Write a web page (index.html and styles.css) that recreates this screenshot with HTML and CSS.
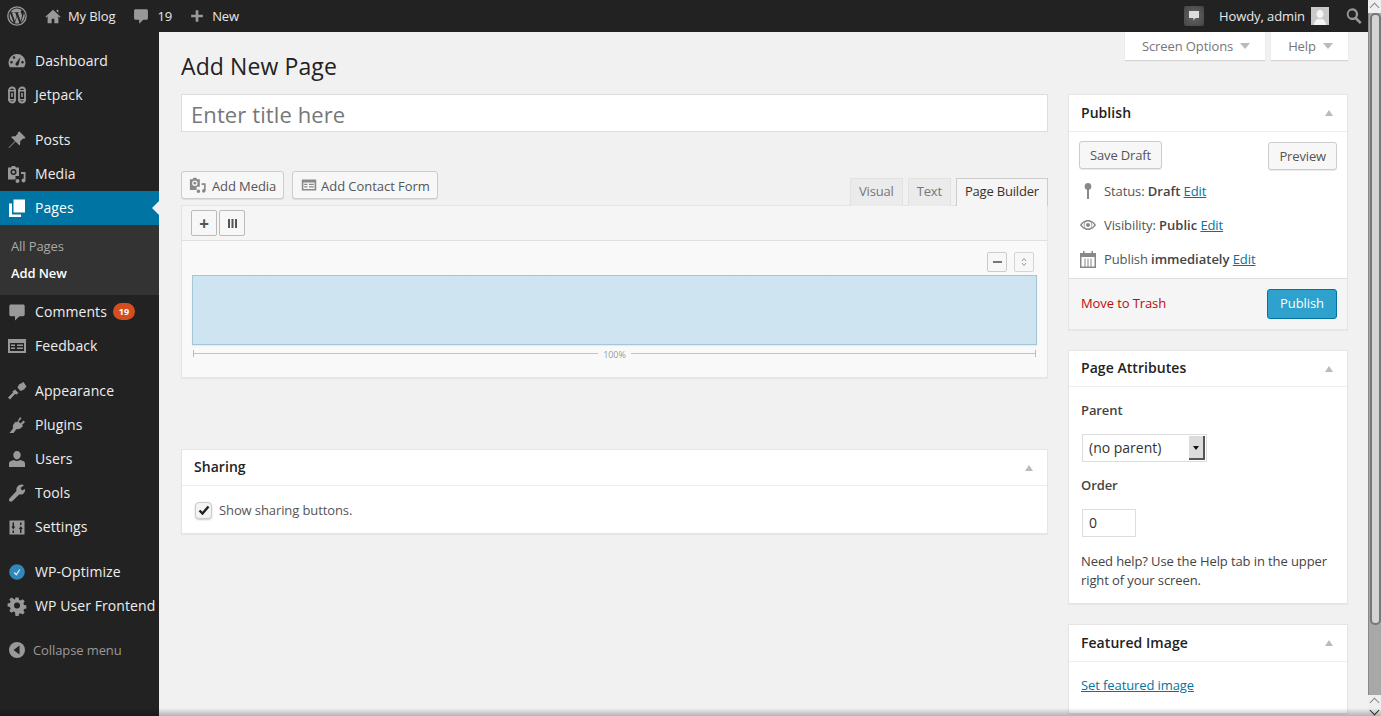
FILE: index.html
```html
<!DOCTYPE html>
<html lang="en">
<head>
<meta charset="utf-8">
<title>Add New Page</title>
<link rel="stylesheet" href="styles.css">
</head>
<body>
<div class="window">
  <div class="viewport">
    <header class="adminbar">
      <div class="bar-left">
        <svg class="bar-wp" viewBox="0 0 20 20"><circle cx="10" cy="10" r="9.2" fill="none" stroke="#999" stroke-width="1.3"/><path fill="#999" d="M2.6 10c0 2.9 1.7 5.4 4.1 6.6L3.1 7c-.3.9-.5 1.9-.5 3zm12.4-.4c0-.9-.3-1.6-.6-2.1-.4-.6-.7-1.100-.7-1.700 0-.7.5-1.300 1.200-1.300h.1A7.400 7.400 0 0 0 3.400 6.300h.5c.8 0 2-.1 2-.1.400 0 .5.600.1.600 0 0-.4.100-.9.100l2.800 8.300 1.700-5-1.200-3.300c-.4 0-.8-.1-.8-.1-.4 0-.4-.7 0-.6 0 0 1.300.1 2 .1.800 0 2-.1 2-.1.400 0 .5.600.1.600 0 0-.4.100-.9.100l2.800 8.200.8-2.600c.3-1.100.6-1.900.6-2.500zm-4.900 1-2.300 6.700a7.500 7.500 0 0 0 4.600-.1l-.1-.1-2.200-6.500zm6.600-4.400.1.800c0 .8-.1 1.600-.6 2.700l-2.300 6.700a7.400 7.400 0 0 0 2.800-10.200z"/></svg>
        <svg class="bar-ico" viewBox="0 0 20 20"><path fill="#999" d="M16 8.500 10 3 1.500 10.700l1 1L4 10.400V18h4.500v-5h3v5H16v-7.600l1.500 1.300 1-1L16 8.500zM14 3h2v3.500l-2-1.800z"/></svg>
        <span class="bar-text">My Blog</span>
        <svg class="bar-ico bar-gap-c" viewBox="0 0 20 20"><path fill="#999" d="M4 2.500h12c1 0 1.700.7 1.700 1.700v8.300c0 1-.7 1.700-1.700 1.700h-3.500L8 18.500v-4.300H4c-1 0-1.700-.7-1.700-1.700V4.200c0-1 .7-1.700 1.700-1.700z"/></svg>
        <span class="bar-text bar-num">19</span>
        <svg class="bar-ico bar-gap" viewBox="0 0 20 20"><path fill="#999" d="M8.500 3.500h3v5h5v3h-5v5h-3v-5h-5v-3h5z"/></svg>
        <span class="bar-text">New</span>
      </div>
      <div class="bar-right">
        <span class="notify"><svg viewBox="0 0 12 12"><path fill="#ddd" d="M1 1h10v7H7.500L5.500 10.500V8H1z"/></svg></span>
        <span class="bar-text howdy">Howdy, admin</span>
        <svg class="avatar" viewBox="0 0 18 18"><rect width="18" height="18" fill="#c9c9c9"/><path fill="#f4f4f4" d="M9 3c2.200 0 3.500 1.700 3.500 4S11 11 9 11 5.500 9.300 5.500 7 6.800 3 9 3zM3 18c0-3.500 2-5.500 4-6.300 1.200.6 2.800.6 4 0 2 .8 4 2.800 4 6.300z"/></svg>
        <svg class="bar-search" viewBox="0 0 20 20"><path fill="#999" d="M8 1.500a6.500 6.500 0 0 1 5.300 10.300l5.200 5.200-2 2-5.200-5.200A6.500 6.500 0 1 1 8 1.500zm0 2.500a4 4 0 1 0 0 8 4 4 0 0 0 0-8z"/></svg>
      </div>
    </header>
    <div class="below">
      <nav class="sidebar">
        <ul class="menu">
          <li class="item"><svg class="mi" viewBox="0 0 20 20"><path fill="#999" d="M10 3a8.500 8.500 0 0 0-8.500 8.500c0 1.800.6 3.500 1.500 4.800h14c.9-1.300 1.500-3 1.500-4.800A8.500 8.500 0 0 0 10 3zM4.500 12.500a1.300 1.300 0 1 1 0-2.600 1.300 1.300 0 0 1 0 2.600zM7 7.800a1.300 1.300 0 1 1 0-2.600 1.300 1.300 0 0 1 0 2.600zm4.500 6.200a1.700 1.700 0 0 1-3-1.500L13.500 6l-2 8zm4-1.500a1.300 1.300 0 1 1 0-2.600 1.300 1.300 0 0 1 0 2.600z"/></svg><span>Dashboard</span></li>
          <li class="item jet"><svg class="mi" viewBox="0 0 20 20"><g fill="none" stroke="#999" stroke-width="1.800"><rect x="2" y="2.500" width="6" height="15" rx="3"/><rect x="12" y="2.500" width="6" height="15" rx="3"/></g><path fill="#999" d="M1 5h8v1.500H1zm10 0h8v1.500h-8zM1 14h8v1.500H1zm10 0h8v1.500h-8zM4.200 8h1.600v4H4.200zm10 0h1.600v4h-1.600z"/></svg><span>Jetpack</span></li>
          <li class="item sep"><svg class="mi" viewBox="0 0 20 20"><path fill="#999" d="M12.500 1.500 18.500 7.500 17 9l-1-.5-3 3c.5 1.500.3 3-.5 4L8.500 11.500 2 18l-.5-.5L8 11 4 7c1-.8 2.500-1 4-.5l3-3-.5-1z"/></svg><span>Posts</span></li>
          <li class="item"><svg class="mi" viewBox="0 0 20 20"><path fill="#999" fill-rule="evenodd" d="M5 2h3l1 1.500h3V12H8.500v3.500H1V3.500h3zM6.500 5a3 3 0 1 0 0 6 3 3 0 0 0 0-6z"/><circle cx="6.500" cy="8" r="1.500" fill="#999"/><path fill="#999" d="M14 8h4.500v8.500a2 2 0 1 1-1.800-2V10H14zM10.500 15a2 2 0 1 1 0 4 2 2 0 0 1 0-4z"/></svg><span>Media</span></li>
          <li class="item current"><svg class="mi" viewBox="0 0 20 20"><path fill="#fff" d="M6.500 1.500H18v13H6.500z"/><path fill="#fff" d="M2 5.500h3v11h9v2.500H2z"/></svg><span>Pages</span><i class="arrow"></i></li>
          <li class="submenu">
            <a class="sub">All Pages</a>
            <a class="sub sub-on">Add New</a>
          </li>
          <li class="item"><svg class="mi" viewBox="0 0 20 20"><path fill="#999" d="M4 2.500h12c1 0 1.700.7 1.700 1.700v8.300c0 1-.7 1.700-1.700 1.700h-3.500L8 18.500v-4.300H4c-1 0-1.700-.7-1.700-1.700V4.200c0-1 .7-1.700 1.700-1.700z"/></svg><span>Comments</span><b class="badge">19</b></li>
          <li class="item"><svg class="mi" viewBox="0 0 20 20"><path fill="#999" fill-rule="evenodd" d="M1 3h18v14H1zm2 4v8h14V7zm1 1.500h4V10H4zm0 3h4V13H4zm6-3h6V10h-6zm0 3h6V13h-6z"/></svg><span>Feedback</span></li>
          <li class="item sep"><svg class="mi" viewBox="0 0 20 20"><path fill="#999" d="M10.500 6.500 12 3.500 16.500 1l3 4.500-2.500 3-3.500 1.500zM8 8.500l3.500 3.500-2 1.500-1.500-.5L3 18.500 1 16.500l5-5-.5-1z"/></svg><span>Appearance</span></li>
          <li class="item"><svg class="mi" viewBox="0 0 20 20"><path fill="#999" d="M13 2l1.500 1.500-3 3 2 2 3-3L18 7l-3 3 1 1-1.500 1.500c-1.500 1.500-3.500 2-5 1.500l-3 4H2.500l3.500-4.500C5.500 11.500 6 9.500 7.500 8L9 6.500l1 1z"/></svg><span>Plugins</span></li>
          <li class="item"><svg class="mi" viewBox="0 0 20 20"><path fill="#999" d="M10 2c2.300 0 3.700 1.800 3.700 4s-1.500 4.500-3.700 4.500S6.300 8.200 6.300 6 7.700 2 10 2zM2 18v-3.500c0-1 .7-2 1.700-2.400L7 11c1.800 1.300 4.200 1.300 6 0l3.300 1.100c1 .4 1.700 1.400 1.700 2.400V18z"/></svg><span>Users</span></li>
          <li class="item"><svg class="mi" viewBox="0 0 20 20"><path fill="#999" d="M14.500 1.500c1 0 1.800.2 2.500.7L13.500 5l1.500 2.500L18 6c.4 2.200-.5 4.400-2.500 5.200-1 .4-2 .4-3 .1L5.500 18c-1 .9-2.300.9-3 .2s-.7-2 .2-3L9.500 8c-.3-1-.3-2 .1-3 .8-2 2.800-3.500 4.900-3.500z"/></svg><span>Tools</span></li>
          <li class="item"><svg class="mi" viewBox="0 0 20 20"><path fill="#999" fill-rule="evenodd" d="M2.500 3.500h15v14h-15zM5.500 5.500v4H4.300l2 3 2-3H7v-4zm0 8v2.500H7v-2.500zM13 5.500V8h1.500V5.500zm.8 3.500-2 3h1.200v4h1.500v-4h1.300z"/></svg><span>Settings</span></li>
          <li class="item sep"><svg class="mi" viewBox="0 0 20 20"><circle cx="10" cy="10" r="7.800" fill="#2f88b9"/><path fill="none" stroke="#dfeef6" stroke-width="1.300" d="M7.300 10.500 9.300 12.800 12.800 7.500"/></svg><span>WP-Optimize</span></li>
          <li class="item"><svg class="mi" viewBox="0 0 20 20"><path fill="#999" fill-rule="evenodd" d="M8.500 1.500h3l.5 2.300 1.600.7 2-1.300 2.100 2.100-1.300 2 .7 1.600 2.300.5v3l-2.300.5-.7 1.600 1.300 2-2.100 2.100-2-1.300-1.600.7-.5 2.300h-3L8 16.200l-1.600-.7-2 1.300-2.100-2.100 1.300-2-.7-1.600L.6 10.600v-3l2.300-.5.7-1.600-1.300-2 2.100-2.100 2 1.300L8 3.800zM10 6.500a3 3 0 1 0 0 6 3 3 0 0 0 0-6z"/></svg><span>WP User Frontend</span></li>
          <li class="collapse"><svg class="cmi" viewBox="0 0 16 16"><circle cx="8" cy="8" r="8" fill="#999"/><path fill="#222" d="M10.500 3.500v9L4.500 8z"/></svg><span>Collapse menu</span></li>
        </ul>
      </nav>
      <main class="content">
        <div class="tabs-top">
          <div class="meta-tab tab-screen">Screen Options<i class="tri-down"></i></div>
          <div class="meta-tab tab-help">Help<i class="tri-down"></i></div>
        </div>
        <h1 class="heading">Add New Page</h1>
        <div class="columns">
          <div class="col-main">
            <div class="title-input">Enter title here</div>
            <div class="toolbar">
              <div class="media-btns">
                <div class="btn btn-media"><svg class="btn-ico" viewBox="0 0 20 20"><path fill="#888" fill-rule="evenodd" d="M5 2h3l1 1.500h3V12H8.500v3.500H1V3.500h3zM6.500 5a3 3 0 1 0 0 6 3 3 0 0 0 0-6z"/><circle cx="6.500" cy="8" r="1.500" fill="#888"/><path fill="#888" d="M14 8h4.500v8.500a2 2 0 1 1-1.800-2V10H14zM10.500 15a2 2 0 1 1 0 4 2 2 0 0 1 0-4z"/></svg>Add Media</div>
                <div class="btn btn-form"><svg class="form-ico" viewBox="0 0 20 20"><path fill="#888" fill-rule="evenodd" d="M1 3h18v14H1zm2 4v8h14V7zm1 1.500h4V10H4zm0 3h4V13H4zm6-3h6V10h-6zm0 3h6V13h-6z"/></svg>Add Contact Form</div>
              </div>
              <div class="editor-tabs">
                <div class="etab">Visual</div>
                <div class="etab">Text</div>
                <div class="etab etab-on">Page Builder</div>
              </div>
            </div>
            <section class="builder">
              <div class="builder-tools">
                <div class="sq">+</div>
                <div class="sq"><svg viewBox="0 0 9 9" class="sq-ico"><path fill="#555" d="M0 0h2v9H0zm3.500 0h2v9h-2zM7 0h2v9H7z"/></svg></div>
              </div>
              <div class="builder-body">
                <div class="row-tools">
                  <div class="rt"><i class="rt-minus"></i></div>
                  <div class="rt rt-light"><svg viewBox="0 0 6 10" class="rt-ico"><path fill="none" stroke="#999" d="M1 4 3 1.500 5 4M1 6l2 2.500L5 6"/></svg></div>
                </div>
                <div class="cell"></div>
                <div class="ruler"><span class="ruler-pct">100%</span></div>
              </div>
            </section>
            <section class="box box-sharing">
              <div class="box-head head-up"><h3>Sharing</h3><i class="tri-up"></i></div>
              <div class="sharing-body">
                <span class="check"><svg viewBox="0 0 12 12"><path fill="none" stroke="#222" stroke-width="2.400" d="M1.500 6.500 4.500 9.500 10.500 2.500"/></svg></span>
                Show sharing buttons.
              </div>
            </section>
          </div>
          <aside class="col-side">
            <section class="box box-publish">
              <div class="box-head head-tall"><h3>Publish</h3><i class="tri-up"></i></div>
              <div class="pub-actions">
                <div class="btn">Save Draft</div>
                <div class="btn btn-preview">Preview</div>
              </div>
              <div class="pub-row"><svg class="pub-ico" viewBox="0 0 16 18"><path fill="#888" d="M8 1a3.500 3.500 0 0 1 1 6.800V17H7V7.800A3.500 3.500 0 0 1 8 1z"/></svg><span>Status: <b>Draft</b> <a>Edit</a></span></div>
              <div class="pub-row"><svg class="pub-ico" viewBox="0 0 16 18"><path fill="#888" fill-rule="evenodd" d="M8 4c3.500 0 6.500 2.500 8 5-1.500 2.500-4.500 5-8 5s-6.500-2.500-8-5c1.500-2.500 4.500-5 8-5zm0 1.500a3.500 3.500 0 1 0 0 7 3.500 3.500 0 0 0 0-7zM1.700 9c1 1.300 2 2.200 3.200 2.900A4.500 4.500 0 0 1 4.900 6.100C3.700 6.800 2.700 7.700 1.700 9zm9.400-2.900a4.500 4.500 0 0 1 0 5.800c1.200-.7 2.200-1.600 3.200-2.900-1-1.300-2-2.200-3.200-2.900z"/><circle cx="8" cy="9" r="2" fill="#888"/></svg><span>Visibility: <b>Public</b> <a>Edit</a></span></div>
              <div class="pub-row"><svg class="pub-ico" viewBox="0 0 16 18"><path fill="#888" fill-rule="evenodd" d="M0 3h3V1h1.500v2h7V1H13v2h3v15H0zm1.500 4v9.500h3V8.500h1v8h2v-8h1v8h2v-8h1v8h3V7z"/></svg><span>Publish <b>immediately</b> <a>Edit</a></span></div>
              <div class="pub-foot">
                <a class="trash">Move to Trash</a>
                <div class="btn-primary">Publish</div>
              </div>
            </section>
            <section class="box box-attrs">
              <div class="box-head head-up"><h3>Page Attributes</h3><i class="tri-up"></i></div>
              <div class="attrs-body">
                <div class="label">Parent</div>
                <div class="select"><span class="select-text">(no parent)</span><i class="select-arrow"></i></div>
                <div class="label">Order</div>
                <div class="order-input">0</div>
                <p class="help-text">Need help? Use the Help tab in the upper right of your screen.</p>
              </div>
            </section>
            <section class="box box-feat">
              <div class="box-head head-tall"><h3>Featured Image</h3><i class="tri-up"></i></div>
              <div class="feat-body"><a>Set featured image</a></div>
            </section>
          </aside>
        </div>
      </main>
    </div>
  </div>
  <div class="scrollbar">
    <i class="sb-up sb-top"></i>
    <div class="sb-track"><div class="sb-thumb"></div></div>
    <i class="sb-up"></i>
    <i class="sb-down"></i>
  </div>
</div>
<div class="fade"></div>
</body>
</html>
```
FILE: styles.css
```css
* { box-sizing: border-box; }
html, body { margin: 0; height: 716px; overflow: hidden; }
body { font-family: "Open Sans", sans-serif; font-size: 13px; letter-spacing: -0.1px; color: #444; background: #f1f1f1; position: relative; }
ul { list-style: none; margin: 0; padding: 0; }
a { color: #0074a2; text-decoration: underline; }
i { display: block; }
h1, h3, p { margin: 0; }

.window { display: flex; height: 716px; }
.viewport { flex: 1; min-width: 0; display: flex; flex-direction: column; overflow: hidden; }

/* admin bar */
.adminbar { height: 32px; flex: none; background: #222; display: flex; justify-content: space-between; align-items: center; color: #eee; }
.bar-left, .bar-right { display: flex; align-items: center; }
.bar-wp { width: 20px; height: 20px; margin-left: 7px; margin-right: 17px; }
.bar-ico { width: 18px; height: 18px; margin-right: 6px; }
.bar-gap { margin-left: 16px; }
.bar-gap-c { margin-left: 17px; margin-right: 5px; }
.bar-num { margin-left: 2px; }
.bar-text { font-size: 13px; line-height: 32px; color: #e8e8e8; }
.notify { width: 20px; height: 20px; border-radius: 2px; background: radial-gradient(circle, #666, #444); display: flex; align-items: center; justify-content: center; margin-right: 15px; }
.notify svg { width: 12px; height: 12px; }
.howdy { margin-right: 6px; }
.avatar { width: 18px; height: 18px; margin-right: 16px; }
.bar-search { width: 18px; height: 18px; margin-right: 5px; }

.below { flex: 1; display: flex; min-height: 0; }

/* sidebar */
.sidebar { width: 159px; flex: none; background: #222; padding-top: 12px; color: #eee; }
.item { height: 34px; display: flex; align-items: center; font-size: 14px; letter-spacing: 0.08px; color: #eee; position: relative; white-space: nowrap; }
.item span { margin-bottom: 2px; }
.item.sep { margin-top: 11px; }
.mi { width: 20px; height: 20px; margin-left: 7px; margin-right: 8px; flex: none; }
.current { background: #0074a2; color: #fff; }
.arrow { position: absolute; right: 0; top: 10px; width: 0; height: 0; border: 7px solid transparent; border-left: 0; border-right-color: #f1f1f1; }
.submenu { background: #333; padding: 8px 0 8px; }
.sub { display: block; height: 27px; line-height: 27px; padding-left: 11px; font-size: 13px; color: #a9a9a9; text-decoration: none; }
.sub-on { color: #fff; font-weight: 600; }
.badge { margin-left: 6px; width: 22px; height: 17px; border-radius: 9px; background: #d54e21; color: #fff; font-size: 9px; line-height: 17px; text-align: center; font-weight: 700; margin-bottom: 2px; }
.collapse { margin-top: 10px; height: 34px; display: flex; align-items: center; font-size: 13px; color: #999; }
.cmi { width: 16px; height: 16px; margin-left: 9px; margin-right: 8px; }

/* content */
.content { flex: 1; min-width: 0; padding: 0 20px 0 22px; position: relative; background: #f1f1f1; }
.tabs-top { position: absolute; top: 0; right: 20px; display: flex; gap: 6px; }
.meta-tab { height: 28px; padding-left: 2px; background: #fff; box-shadow: 0 1px 1px rgba(0,0,0,.12); display: flex; align-items: center; justify-content: center; color: #777; font-size: 13px; }
.tab-screen { width: 140px; }
.tab-help { width: 77px; }
.tri-down { width: 0; height: 0; border: 5px solid transparent; border-top: 6px solid #bbb; border-bottom: 0; margin-left: 7px; }
.heading { font-size: 23px; letter-spacing: 0.1px; font-weight: 400; color: #222; line-height: 30px; padding-top: 19px; height: 62px; }

.columns { display: flex; gap: 20px; align-items: flex-start; }
.col-main { width: 867px; flex: none; }
.col-side { width: 280px; flex: none; }

.title-input { height: 38px; background: #fff; border: 1px solid #ddd; font-size: 22px; letter-spacing: 0.1px; line-height: 38px; padding-left: 9px; color: #777; overflow: hidden; }

.toolbar { height: 73px; display: flex; justify-content: space-between; align-items: flex-end; }
.media-btns { display: flex; gap: 8px; margin-bottom: 6px; }
.btn { height: 28px; display: inline-flex; align-items: center; padding: 0 10px; border: 1px solid #ccc; border-radius: 3px; background: #f7f7f7; box-shadow: 0 1px 0 rgba(0,0,0,.08); color: #555; font-size: 13px; letter-spacing: -0.15px; }
.btn-media { padding: 2px 7px 0; letter-spacing: -0.1px; }
.btn-form { padding: 2px 7px 0 8px; letter-spacing: -0.05px; }
.btn-ico { width: 18px; height: 18px; margin-right: 5px; margin-top: -2px; }
.form-ico { width: 16px; height: 16px; margin-right: 4px; margin-top: -2px; }

.editor-tabs { display: flex; gap: 5px; position: relative; top: 1px; }
.etab { height: 28px; padding: 0 8px; line-height: 25px; letter-spacing: -0.18px; background: #ebebeb; border: 1px solid #e2e2e2; border-bottom: 0; color: #777; font-size: 13px; }
.etab-on { background: #f5f5f5; color: #333; border-color: #ccc; }

.builder { background: #f9f9f9; border: 1px solid #e5e5e5; height: 173px; box-shadow: 0 1px 1px rgba(0,0,0,.04); }
.builder-tools { height: 35px; background: #f5f5f5; border-bottom: 1px solid #dfdfdf; display: flex; gap: 2px; padding: 4px 0 0 9px; }
.sq { width: 26px; height: 26px; border: 1px solid #bbb; border-radius: 2px; background: #f7f7f7; display: flex; align-items: center; justify-content: center; color: #555; font-size: 17px; font-weight: 700; line-height: 1; }
.sq-ico { width: 9px; height: 9px; }
.builder-body { padding: 0 10px; }
.row-tools { height: 34px; display: flex; justify-content: flex-end; gap: 7px; padding: 11px 3px 0 0; }
.rt { width: 20px; height: 20px; border: 1px solid #ccc; border-radius: 2px; background: #f7f7f7; display: flex; align-items: center; justify-content: center; }
.rt-light { border-color: #d5d5d5; }
.rt-minus { width: 9px; height: 2px; background: #777; }
.rt-ico { width: 6px; height: 10px; }
.cell { height: 70px; border: 1px solid #a5c6d6; background: repeating-linear-gradient(135deg, #cfe5f1 0, #cfe5f1 1px, #cde3ef 1px, #cde3ef 2px); box-shadow: 0 1px 1px rgba(0,0,0,.06); }
.ruler { height: 7px; margin: 5px 1px 0; border-left: 1px solid #bbb; border-right: 1px solid #bbb; position: relative; display: flex; justify-content: center; }
.ruler::before { content: ""; position: absolute; left: 0; right: 0; top: 3px; height: 1px; background: #c4c4c4; }
.ruler-pct { position: relative; background: #f9f9f9; padding: 0 5px; font-size: 9px; line-height: 9px; color: #999; height: 10px; }

.box { background: #fff; border: 1px solid #e5e5e5; box-shadow: 0 1px 1px rgba(0,0,0,.04); }
.box-head { height: 36px; border-bottom: 1px solid #eee; display: flex; align-items: center; justify-content: space-between; padding: 0 14px 0 12px; }
.box-head h3 { font-size: 14px; letter-spacing: 0.05px; font-weight: 600; color: #222; }
.head-tall { height: 37px; padding-bottom: 1px; }
.head-up h3 { margin-bottom: 2px; }
.tri-up { width: 0; height: 0; border: 4px solid transparent; border-top: 0; border-bottom: 6px solid #bbb; }
.box-sharing { margin-top: 71px; height: 85px; }
.sharing-body { display: flex; align-items: center; padding: 15px 0 0 13px; font-size: 13px; color: #555; }
.check { width: 17px; height: 17px; border: 1px solid #ccc; border-radius: 4px; margin-right: 7px; background: #f4f4f4; box-shadow: 0 1px 2px rgba(0,0,0,.2); display: flex; align-items: center; justify-content: center; }
.check svg { width: 12px; height: 12px; }

.box-publish { height: 236px; }
.pub-actions { display: flex; justify-content: space-between; padding: 9px 10px 0 10px; height: 42px; align-items: flex-start; }
.btn-preview { margin-top: 1px; }
.pub-row { height: 34px; display: flex; align-items: center; font-size: 13px; color: #555; padding-left: 11px; }
.pub-row b { font-weight: 600; letter-spacing: 0; color: #444; }
.pub-ico { width: 16px; height: 18px; margin-right: 8px; flex: none; }
.pub-foot { margin-top: 2px; height: 51px; border-top: 1px solid #dfdfdf; background: #f5f5f5; display: flex; justify-content: space-between; align-items: center; padding: 0 10px 0 12px; }
.trash { color: #bc0b0b; text-decoration: none; font-size: 13px; margin-bottom: 2px; }
.btn-primary { width: 70px; height: 30px; padding-bottom: 2px; background: #2ea2cc; border: 1px solid #0074a2; border-radius: 3px; color: #fff; font-size: 13px; display: flex; align-items: center; justify-content: center; }

.box-attrs { margin-top: 20px; height: 254px; }
.attrs-body { padding: 0 12px; }
.label { font-size: 13px; font-weight: 600; color: #444; padding-top: 14px; line-height: 18px; }
.select { width: 125px; height: 28px; margin: 15px 0 0 1px; border: 1px solid #ddd; background: #fff; display: flex; align-items: center; justify-content: space-between; padding: 0 1px 0 6px; font-size: 14px; letter-spacing: 0; color: #333; }
.select-text { margin-bottom: 2px; }
.select-arrow { width: 16px; height: 24px; background: #dcdcdc; border-right: 2px solid #555; border-bottom: 2px solid #555; position: relative; }
.select-arrow::after { content: ""; position: absolute; left: 4px; top: 10px; border: 3px solid transparent; border-top: 4px solid #111; border-bottom: 0; }
.order-input { width: 54px; height: 28px; margin: 15px 0 0 1px; border: 1px solid #ddd; background: #fff; font-size: 14px; line-height: 26px; padding-left: 6px; color: #333; }
.help-text { margin-top: 15px; font-size: 13px; line-height: 19px; color: #444; }

.box-feat { margin-top: 20px; height: 90px; }
.feat-body { padding: 14px 12px; font-size: 13px; }

/* scrollbar */
.scrollbar { width: 13px; flex: none; background: #efefef; display: flex; flex-direction: column; align-items: center; }
.sb-track { flex: 1; width: 13px; background: #a8a8a6; border-left: 1px solid #888; padding-left: 1px; }
.sb-thumb { height: 612px; width: 11px; background: #d4d4d2; border: 2px solid #777; border-radius: 5px; }
.sb-up, .sb-down { width: 13px; height: 11px; flex: none; position: relative; }
.sb-down { height: 10px; }
.sb-top { height: 13px; }
.sb-up::after { content: ""; position: absolute; left: 3px; top: 4px; width: 6px; height: 6px; border-left: 1px solid #888; border-top: 1px solid #888; transform: rotate(45deg); }
.sb-down::after { content: ""; position: absolute; left: 3px; top: 1px; width: 6px; height: 6px; border-right: 1px solid #333; border-bottom: 1px solid #333; transform: rotate(45deg); }

.fade { position: absolute; left: 0; right: 0; bottom: 0; height: 8px; background: linear-gradient(to bottom, rgba(0,0,0,0), rgba(0,0,0,.25)); pointer-events: none; }
```
